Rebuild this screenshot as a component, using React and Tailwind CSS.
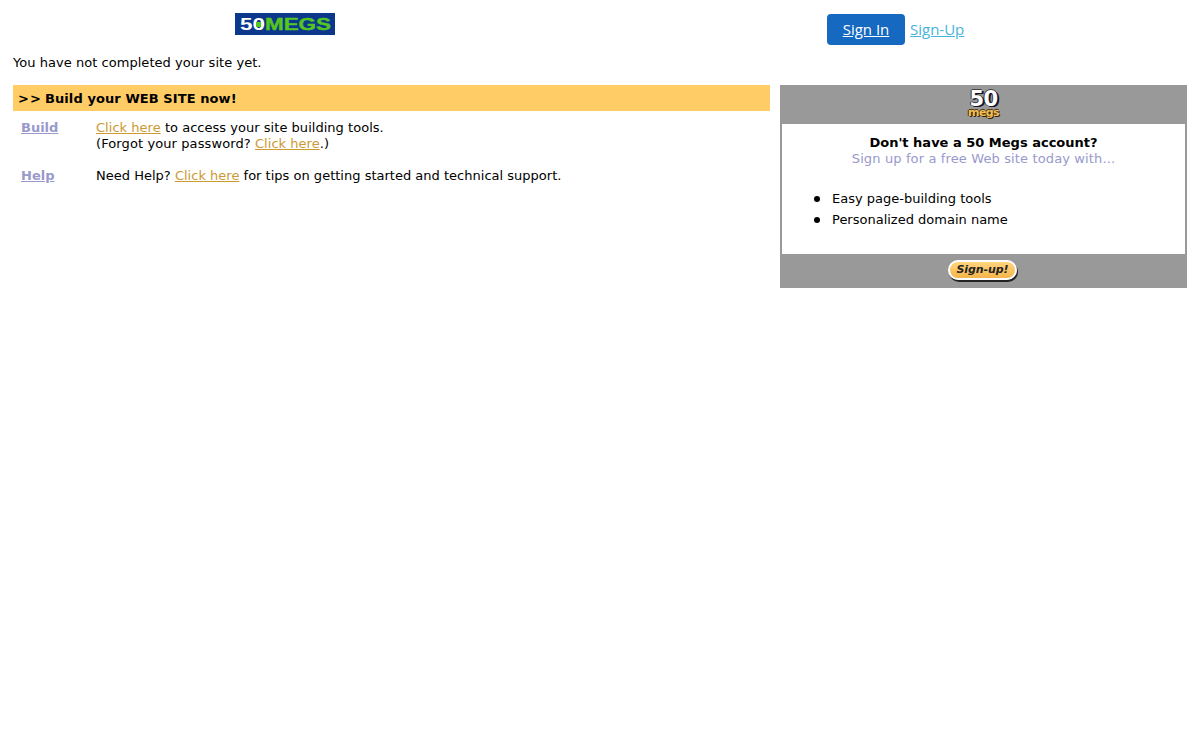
// App.jsx
const verdana = 'font-["DejaVu_Sans",Verdana,sans-serif]';

function Logo50Megs() {
  return (
    <div className="w-[100px] h-[22px] bg-[#0c388c] flex items-center pl-[5px] pt-[1px] font-['Liberation_Sans',sans-serif] font-bold text-[16px] leading-none">
      <span className="relative inline-block w-[25px] text-white">
        <span className="inline-block origin-left scale-x-[1.4]">50</span>
        <span className="absolute left-[16px] top-[5px] w-[5px] h-[5px] bg-[#55c51f]" />
      </span>
      <span className="inline-block origin-left scale-x-[1.4] text-[#55c51f] [-webkit-text-stroke:0.4px_#55c51f]">MEGS</span>
    </div>
  );
}

function Badge50() {
  return (
    <div className="flex flex-col items-center font-['DejaVu_Sans',sans-serif] font-bold leading-none mt-[2px]">
      <span className="text-white text-[21px] h-[15px] leading-[15px] tracking-[-0.5px] [text-shadow:2px_1px_0_#14142b,1px_1px_0_#14142b,-1px_0_0_#333,0_-1px_0_#444]">50</span>
      <span className="text-[#f5c058] text-[11px] h-[12px] leading-[11px] tracking-[-0.6px] [text-shadow:1px_1px_0_#2e2006,-1px_0_0_#4a360c,0_-1px_0_#4a360c]">megs</span>
    </div>
  );
}

export default function App() {
  return (
    <div className={`${verdana} bg-white min-h-[740px] text-[13px] text-black`}>
      {/* шапка */}
      <div className="flex h-[55px] pl-[235px] pt-[13px]">
        <Logo50Megs />
        <div className="flex items-start ml-[492px] mt-[1px] font-['Open_Sans',sans-serif] text-[15px]">
          <a href="#" className="flex items-center justify-center w-[78px] h-[31px] bg-[#1569c0] text-white underline rounded-[4px]">Sign In</a>
          <a href="#" className="ml-[5px] mt-[4px] text-[#46b4dc] underline">Sign-Up</a>
        </div>
      </div>

      <p className="pl-[13px] h-[30px] leading-[16px] tracking-[0.04px]">You have not completed your site yet.</p>

      <div className="flex pl-[13px] gap-[10px]">
        <div className="w-[757px]">
          <div className="h-[26px] bg-[#ffcc66] pl-[5px] pt-[2px] flex items-center font-bold">
            <span className="w-[27px] tracking-[1px]">&gt;&gt;</span>
            <span className="tracking-[0.08px]">Build your WEB SITE now!</span>
          </div>
          <div className="flex mt-[9px] pl-[8px] leading-[16px]">
            <a href="#" className="w-[75px] font-bold text-[#9999cc] underline">Build</a>
            <div className="tracking-[0.03px]">
              <a href="#" className="text-[#cc9933] underline">Click here</a> to access your site building tools.<br />
              <span className="tracking-[0.1px]">(Forgot your password? </span><a href="#" className="text-[#cc9933] underline">Click here</a>.)
            </div>
          </div>
          <div className="flex mt-[16px] pl-[8px] leading-[16px]">
            <a href="#" className="w-[75px] font-bold text-[#9999cc] underline">Help</a>
            <div className="tracking-[0.01px]">
              Need Help? <a href="#" className="text-[#cc9933] underline">Click here</a> for tips on getting started and technical support.
            </div>
          </div>
        </div>

        <div className="w-[407px] h-[203px] bg-[#999999] flex flex-col">
          <div className="h-[39px] flex items-center justify-center"><Badge50 /></div>
          <div className="h-[130px] mx-[2px] bg-white pt-[11px]">
            <div className="text-center font-bold leading-[16px]">Don't have a 50 Megs account?</div>
            <div className="text-center text-[#9999cc] leading-[16px] tracking-[0.13px]">Sign up for a free Web site today with...</div>
            <ul className="pl-[32px] mt-[24px] leading-[16px] flex flex-col gap-[5px]">
              <li className="flex items-center gap-[12px]"><span className="w-[6px] h-[6px] rounded-full bg-black" />Easy page-building tools</li>
              <li className="flex items-center gap-[12px]"><span className="w-[6px] h-[6px] rounded-full bg-black" />Personalized domain name</li>
            </ul>
          </div>
          <div className="flex-1 flex items-center justify-center">
            <a href="#" className="flex items-center justify-center w-[69px] h-[20px] mb-[2px] mr-[2px] rounded-full bg-gradient-to-b from-[#ffd57c] to-[#f4b549] border-2 border-white shadow-[1px_2px_0_#222] font-bold italic text-[11px] tracking-[-0.1px] text-[#222]">Sign-up!</a>
          </div>
        </div>
      </div>
    </div>
  );
}
